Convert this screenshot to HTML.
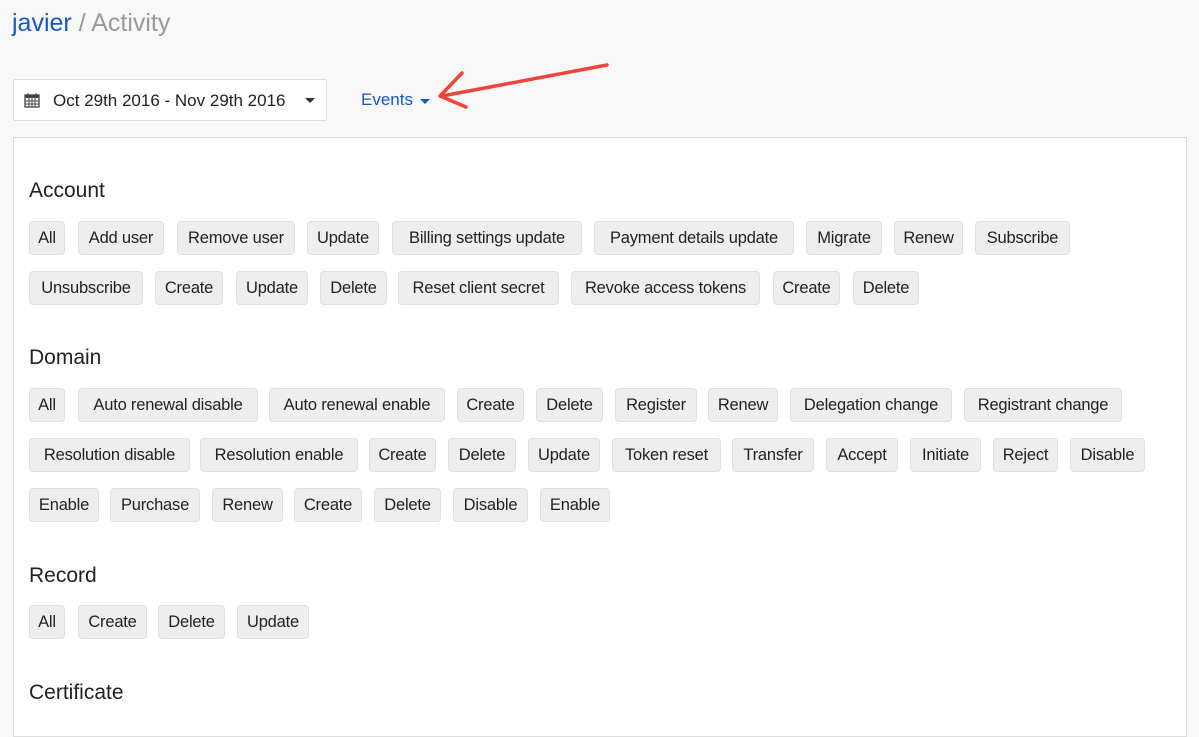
<!DOCTYPE html>
<html><head><meta charset="utf-8"><style>
body{margin:0;width:1199px;height:710px;overflow:hidden;background:#f8f8f8;font-family:"Liberation Sans",Arial,sans-serif;position:relative}
.crumb{position:absolute;left:12px;top:9px;font-size:25px;color:#999}
.crumb a{color:#1a56c8;text-decoration:none}
.date{position:absolute;left:13px;top:79px;width:314px;height:42px;background:#fff;border:1px solid #ddd;border-radius:2px;box-sizing:border-box;font-size:17px;color:#222}
.date span{position:absolute;left:39px;top:11px}
.caret{position:absolute;width:0;height:0;border-left:5px solid transparent;border-right:5px solid transparent;border-top:5px solid #333}
.events{position:absolute;left:361px;top:90px;font-size:17px;color:#1a56c8}
.panel{position:absolute;left:13px;top:137px;width:1174px;height:600px;background:#fff;border:1px solid #ddd;box-sizing:border-box}
h2{position:absolute;left:29px;margin:0;font-weight:normal;font-size:21px;color:#222}
.t{position:absolute;height:34px;box-sizing:border-box;background:#eee;border:1px solid #e0e0e0;border-radius:4px;font-size:16.5px;color:#222;text-align:center;line-height:32px;white-space:nowrap;letter-spacing:-0.2px}
</style></head><body>
<div class="crumb"><a>javier</a> / Activity</div>
<div class="date">
<svg style="position:absolute;left:10px;top:12px" width="16" height="16" viewBox="0 0 16 16"><rect x="1" y="3" width="14" height="12" fill="none" stroke="#444" stroke-width="1.3"/><rect x="1" y="3" width="14" height="3" fill="#444"/><path d="M4 1v4M12 1v4M1 9h14M1 12h14M5 6v9M8 6v9M11 6v9" stroke="#444" stroke-width="1"/></svg>
<span>Oct 29th 2016 - Nov 29th 2016</span><div class="caret" style="left:291px;top:18px"></div></div>
<div class="events">Events</div><div class="caret" style="left:420px;top:99px;border-top-color:#1a56c8"></div>
<svg style="position:absolute;left:430px;top:55px" width="185" height="60"><path d="M177 10 L12 41 M32 18 L10 41 L36 52" stroke="#f0443a" stroke-width="3.5" fill="none" stroke-linecap="round" stroke-linejoin="round"/></svg>
<div class="panel"></div>
<h2 style="top:179px">Account</h2>
<h2 style="top:346px">Domain</h2>
<h2 style="top:564px">Record</h2>
<h2 style="top:681px">Certificate</h2>

<div class="t" style="top:221px;left:29px;width:36px">All</div>
<div class="t" style="top:221px;left:78px;width:86px">Add user</div>
<div class="t" style="top:221px;left:177px;width:118px">Remove user</div>
<div class="t" style="top:221px;left:307px;width:72px">Update</div>
<div class="t" style="top:221px;left:392px;width:190px">Billing settings update</div>
<div class="t" style="top:221px;left:594px;width:200px">Payment details update</div>
<div class="t" style="top:221px;left:806px;width:76px">Migrate</div>
<div class="t" style="top:221px;left:894px;width:69px">Renew</div>
<div class="t" style="top:221px;left:975px;width:95px">Subscribe</div>

<div class="t" style="top:271px;left:29px;width:114px">Unsubscribe</div>
<div class="t" style="top:271px;left:155px;width:68px">Create</div>
<div class="t" style="top:271px;left:236px;width:72px">Update</div>
<div class="t" style="top:271px;left:320px;width:67px">Delete</div>
<div class="t" style="top:271px;left:398px;width:161px">Reset client secret</div>
<div class="t" style="top:271px;left:571px;width:189px">Revoke access tokens</div>
<div class="t" style="top:271px;left:773px;width:67px">Create</div>
<div class="t" style="top:271px;left:853px;width:66px">Delete</div>

<div class="t" style="top:388px;left:29px;width:36px">All</div>
<div class="t" style="top:388px;left:78px;width:180px">Auto renewal disable</div>
<div class="t" style="top:388px;left:269px;width:176px">Auto renewal enable</div>
<div class="t" style="top:388px;left:457px;width:67px">Create</div>
<div class="t" style="top:388px;left:536px;width:67px">Delete</div>
<div class="t" style="top:388px;left:615px;width:82px">Register</div>
<div class="t" style="top:388px;left:708px;width:70px">Renew</div>
<div class="t" style="top:388px;left:790px;width:162px">Delegation change</div>
<div class="t" style="top:388px;left:964px;width:158px">Registrant change</div>

<div class="t" style="top:438px;left:29px;width:161px">Resolution disable</div>
<div class="t" style="top:438px;left:200px;width:158px">Resolution enable</div>
<div class="t" style="top:438px;left:369px;width:67px">Create</div>
<div class="t" style="top:438px;left:448px;width:68px">Delete</div>
<div class="t" style="top:438px;left:528px;width:72px">Update</div>
<div class="t" style="top:438px;left:612px;width:109px">Token reset</div>
<div class="t" style="top:438px;left:732px;width:82px">Transfer</div>
<div class="t" style="top:438px;left:826px;width:72px">Accept</div>
<div class="t" style="top:438px;left:910px;width:71px">Initiate</div>
<div class="t" style="top:438px;left:993px;width:65px">Reject</div>
<div class="t" style="top:438px;left:1070px;width:75px">Disable</div>

<div class="t" style="top:488px;left:29px;width:70px">Enable</div>
<div class="t" style="top:488px;left:110px;width:90px">Purchase</div>
<div class="t" style="top:488px;left:212px;width:71px">Renew</div>
<div class="t" style="top:488px;left:294px;width:68px">Create</div>
<div class="t" style="top:488px;left:374px;width:67px">Delete</div>
<div class="t" style="top:488px;left:453px;width:75px">Disable</div>
<div class="t" style="top:488px;left:540px;width:70px">Enable</div>

<div class="t" style="top:605px;left:29px;width:36px">All</div>
<div class="t" style="top:605px;left:78px;width:69px">Create</div>
<div class="t" style="top:605px;left:158px;width:67px">Delete</div>
<div class="t" style="top:605px;left:237px;width:72px">Update</div>
</body></html>
